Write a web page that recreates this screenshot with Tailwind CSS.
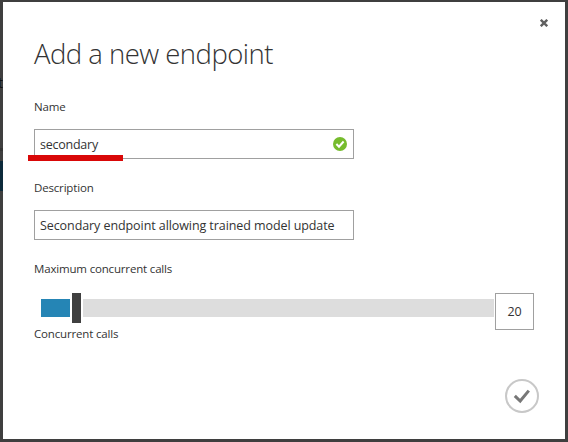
<!DOCTYPE html>
<html lang="en">
<head>
<meta charset="utf-8">
<title>Add a new endpoint</title>
<script src="https://cdn.jsdelivr.net/npm/@tailwindcss/browser@4"></script>
</head>
<body class="relative h-[442px] w-[568px] overflow-hidden bg-[#3f3f3f] pt-[2px] pl-[3px] font-['Open_Sans','Noto_Sans',sans-serif] text-[11.5px] tracking-[-0.17px] text-[#333]">
<!-- page behind the dialog -->
<div class="absolute top-0 left-0 h-full w-[3px] overflow-hidden">
  <span class="absolute top-[73px] left-[-2px] text-[14px] leading-[20px] text-[#111]">t</span>
  <div class="absolute top-[148px] h-[3px] w-full bg-[#343434]"></div>
  <div class="absolute top-[161px] h-[30px] w-full bg-[#0d2a3b]"></div>
</div>
<main class="relative flex h-[437px] w-[562px] flex-col bg-white pr-[31px] pl-[31px]">
  <button class="absolute top-[17px] right-[17px] size-[8px]" aria-label="Close">
    <svg class="block" width="8" height="8" viewBox="0 0 8 8" fill="none" stroke="#606060" stroke-width="2.4"><path d="M.8.8l6.4 6.4M7.2.8L.8 7.2"/></svg>
  </button>
  <h1 class="mt-[32px] h-[40px] text-[27.5px] leading-[40px] font-light tracking-[-0.52px] whitespace-nowrap">Add a new endpoint</h1>
  <label class="mt-[25px] h-[16px] leading-[16px]">Name</label>
  <div class="relative mt-[14px] flex h-[30px] w-[320px] items-center justify-between border border-[#a0a0a0] pr-[6px] pl-[5px] text-[12.5px] tracking-[-0.08px]">
    <span class="pt-[2px] whitespace-nowrap tracking-[-0.24px]">secondary</span>
    <svg width="14" height="14" viewBox="0 0 14 14"><circle cx="7" cy="7" r="7" fill="#76bc2d"/><path d="M3.4 7l2.6 2.7 4.6-5.2" fill="none" stroke="#fff" stroke-width="2"/></svg>
    <div class="absolute top-[25px] left-[-7px] h-[6px] w-[95px] bg-[#d90808]"></div>
  </div>
  <label class="mt-[21px] h-[16px] leading-[16px]">Description</label>
  <div class="mt-[14px] flex h-[30px] w-[320px] items-center border border-[#a0a0a0] pt-[2px] pl-[5px] text-[12.5px] tracking-[-0.08px]">
    <span class="whitespace-nowrap">Secondary endpoint allowing trained model update</span>
  </div>
  <label class="mt-[21px] h-[16px] leading-[16px]">Maximum concurrent calls</label>
  <div class="mt-[16px] flex h-[37px] items-start pl-[7px]">
    <div class="mt-[6px] h-[18px] w-[29px] bg-[#2585b5]"></div>
    <div class="mx-[2px] h-[30px] w-[9px] bg-[#404040]"></div>
    <div class="mt-[6px] mr-px h-[18px] w-[411px] bg-[#ddd]"></div>
    <div class="flex h-[37px] w-[39px] items-center justify-center border border-[#a0a0a0] pt-[2px] text-[12.5px]">20</div>
  </div>
  <div class="mt-[-4px] h-[16px] leading-[16px]">Concurrent calls</div>
  <button class="mt-[37px] mr-[-5px] size-[34px] self-end" aria-label="OK">
    <svg class="block" width="34" height="34" viewBox="0 0 34 34" fill="none"><circle cx="17" cy="17" r="16" stroke="#c8c8c8" stroke-width="2"/><path d="M9.8 16.8l5.4 5.2 8.6-10.4" stroke="#777" stroke-width="3"/></svg>
  </button>
</main>
</body>
</html>
